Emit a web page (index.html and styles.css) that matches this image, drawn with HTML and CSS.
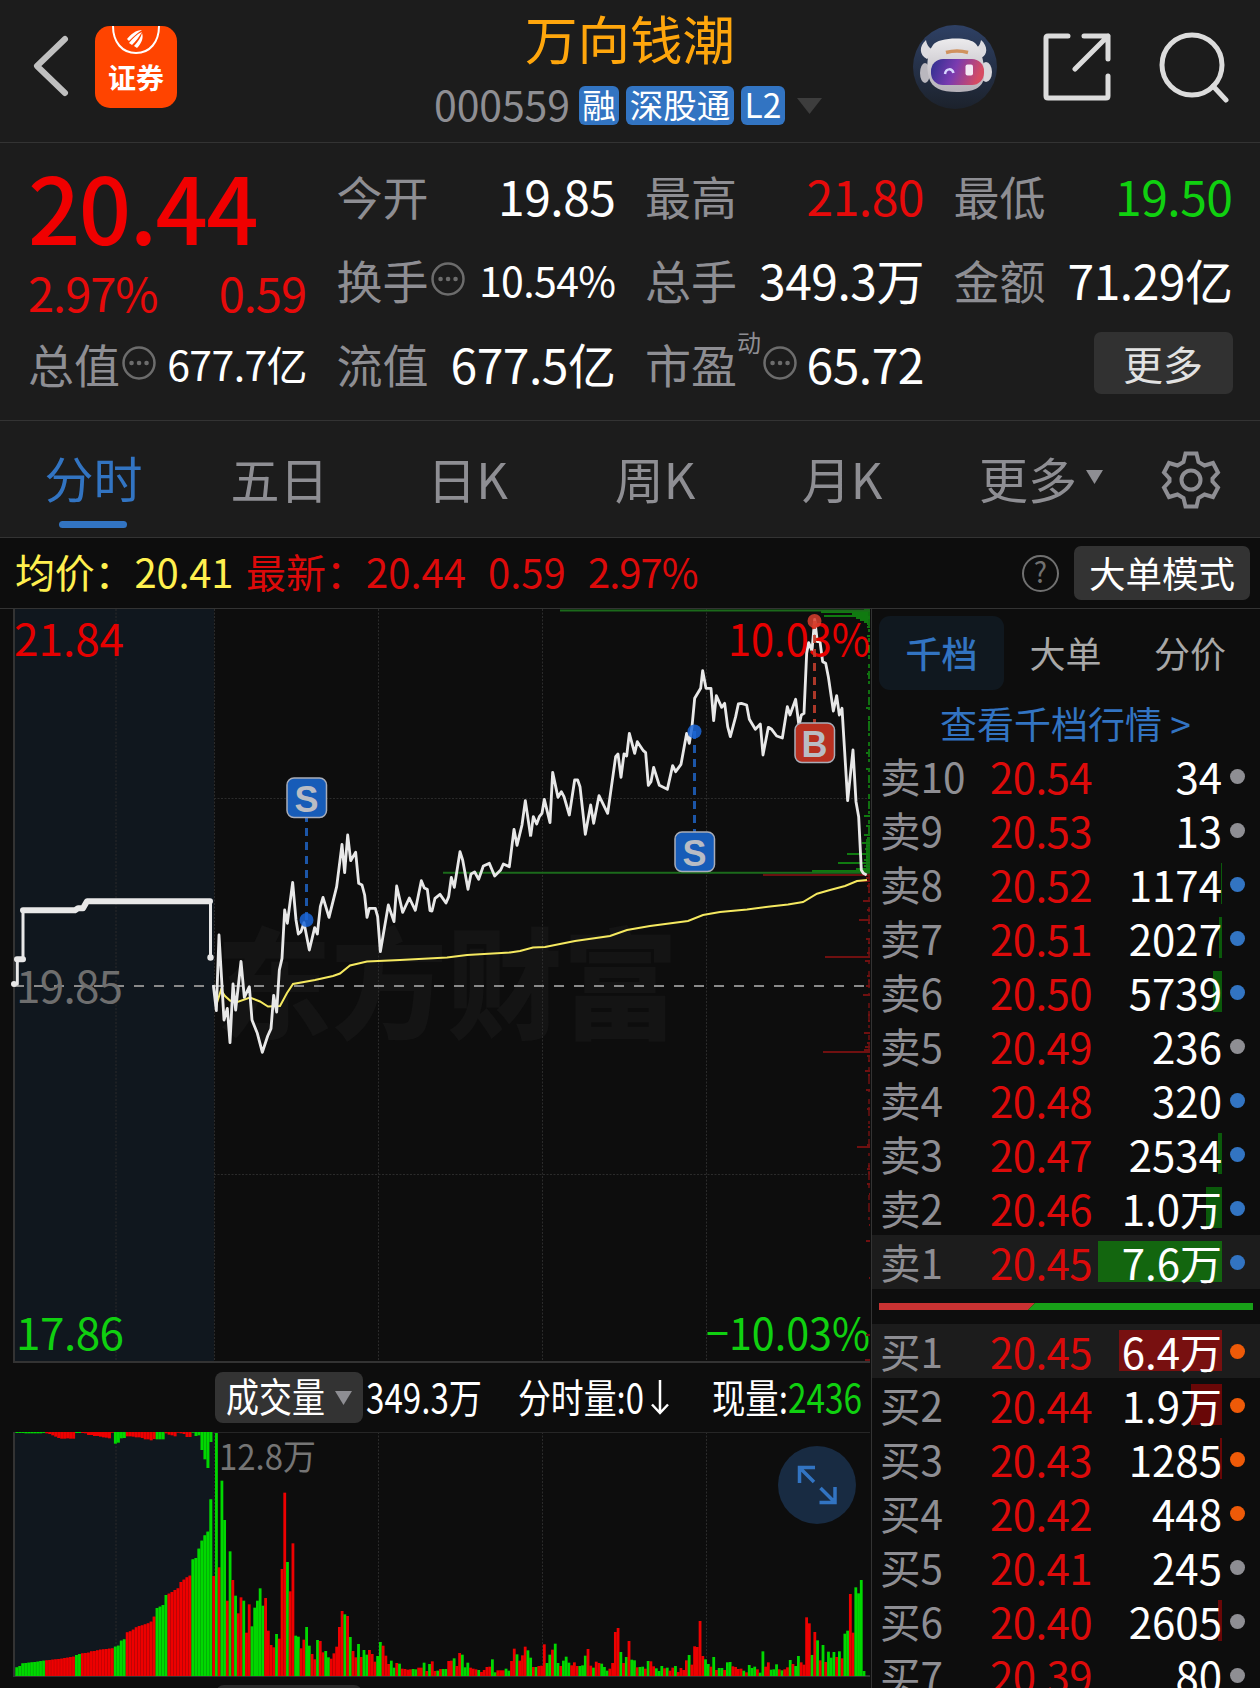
FILE: index.html
```html
<!DOCTYPE html>
<html lang="zh-CN">
<head>
<meta charset="utf-8">
<title>万向钱潮 000559</title>
<link rel="stylesheet" href="styles.css">
</head>
<body>
<header class="header">
  <svg class="back" width="44" height="64" viewBox="0 0 44 64"><path d="M37 5 9 32l28 27" fill="none" stroke="#bfbfbf" stroke-width="6" stroke-linecap="round" stroke-linejoin="round"/></svg>
  <div class="broker">
    <svg class="broker-mark" width="82" height="32" viewBox="0 0 82 32"><path d="M18 0c0 16 9 27 23 27S64 16 64 0" fill="none" stroke="#fff" stroke-width="2"/><path d="M32 13c4-5 9-9 15-9-5 3-9 7-13 11zM34 17c4-5 8-9 13-11-3 5-6 9-10 13zM39 20c4-4 7-9 8-13 2 5-1 11-5 15z" fill="#fff"/></svg>
    <span>证券</span>
  </div>
  <div class="title">
    <h1>万向钱潮</h1>
    <div class="code-row">
      <span class="code">000559</span>
      <span class="badge b1">融</span><span class="badge b3">深股通</span><span class="badge b2">L2</span>
      <svg width="26" height="18" viewBox="0 0 26 18"><path d="M0 1h25L12.500 17z" fill="#3d3d3d"/></svg>
    </div>
  </div>
  <div class="actions">
    <svg width="84" height="84" viewBox="0 0 84 84">
      <defs>
        <linearGradient id="sky" x1="0" y1="0" x2="0" y2="1"><stop offset="0" stop-color="#2e4064"/><stop offset="1" stop-color="#1c222c"/></linearGradient>
        <linearGradient id="visor" x1="0" y1="0" x2="1" y2=".2"><stop offset="0" stop-color="#2b2f8e"/><stop offset=".5" stop-color="#7a3bb0"/><stop offset="1" stop-color="#d64b62"/></linearGradient>
        <linearGradient id="shell" x1="0" y1="0" x2="0" y2="1"><stop offset="0" stop-color="#ecebed"/><stop offset="1" stop-color="#b4b0b8"/></linearGradient>
      </defs>
      <circle cx="42" cy="42" r="42" fill="url(#sky)"/>
      <path d="M13 15c-7 6-7 15 1 19l10-9c-7 0-10-4-11-10zM68 15c7 6 7 15 0 18l-10-9c6 0 9-3 10-9z" fill="#dcdbe0"/>
      <ellipse cx="12" cy="48" rx="5" ry="10" fill="#b9b7be"/><ellipse cx="73" cy="47" rx="6" ry="10" fill="#d9d7db"/>
      <path d="M20 20c5-8 37-9 43-1 6 7 9 21 8 33-1 11-11 15-27 15s-25-4-28-14c-3-11-2-25 4-33z" fill="url(#shell)"/>
      <rect x="18" y="34" width="53" height="26" rx="12" fill="url(#visor)"/>
      <path d="M33 27.500q11-3 22 0" stroke="#d0925e" stroke-width="3.500" fill="none"/>
      <path d="M32 49c1-6 7-6 8.500-1" stroke="#d8d6ff" stroke-width="2.500" fill="none"/><rect x="52.500" y="39.500" width="7.500" height="11" rx="2" fill="#f3e8f4"/>
    </svg>
    <svg width="68" height="68" viewBox="0 0 68 68" fill="none" stroke="#dcdcdc" stroke-width="5" stroke-linecap="round" stroke-linejoin="round"><path d="M25 3H5q-2 0-2 2v58q0 2 2 2h58q2 0 2-2V43M41 3h24v23M65 3 32 36"/></svg>
    <svg width="72" height="72" viewBox="0 0 72 72" fill="none" stroke="#dcdcdc" stroke-width="5" stroke-linecap="round"><circle cx="34" cy="34" r="30"/><path d="M55 55 68 69"/></svg>
  </div>
</header>

<section class="quote">
  <div class="price">
    <div class="last">20.44</div>
    <div class="change"><span>2.97%</span><span>0.59</span></div>
  </div>
  <div class="cell"><label>今开</label><b>19.85</b></div>
  <div class="cell"><label>最高</label><b class="up">21.80</b></div>
  <div class="cell"><label>最低</label><b class="down">19.50</b></div>
  <div class="cell"><label>换手</label><svg class="dots" width="34" height="34" viewBox="0 0 34 34"><circle cx="17" cy="17" r="15.500"/><path d="M9.500 17h.1M17 17h.1M24.500 17h.1"/></svg><b class="sm">10.54%</b></div>
  <div class="cell"><label>总手</label><b>349.3万</b></div>
  <div class="cell"><label>金额</label><b>71.29亿</b></div>
  <div class="cell"><label>总值</label><svg class="dots" width="34" height="34" viewBox="0 0 34 34"><circle cx="17" cy="17" r="15.500"/><path d="M9.500 17h.1M17 17h.1M24.500 17h.1"/></svg><b class="sm">677.7亿</b></div>
  <div class="cell"><label>流值</label><b>677.5亿</b></div>
  <div class="cell"><label>市盈</label><sup>动</sup><svg class="dots" width="34" height="34" viewBox="0 0 34 34"><circle cx="17" cy="17" r="15.500"/><path d="M9.500 17h.1M17 17h.1M24.500 17h.1"/></svg><b>65.72</b></div>
  <div class="cell end"><button class="more">更多</button></div>
</section>

<nav class="tabs">
  <span class="on">分时</span><span>五日</span><span class="dk">日K</span><span>周K</span><span>月K</span>
  <span class="drop">更多<svg width="17" height="14" viewBox="0 0 17 14"><path d="M0 0h17L8.500 14z" fill="#8e8e93"/></svg></span>
  <svg class="gear" width="60" height="60" viewBox="0 0 60 60" fill="none" stroke="#8e8e93" stroke-width="4"><path d="M24.500 3.500h11l2 8.500 6 3.500 8.500-2.500 5 9.500-5.500 6v3l5.500 6-5 9.500-8.500-2.500-6 3.500-2 8.500h-11l-2-8.500-6-3.500-8.500 2.500-5-9.500 5.500-6v-3l-5.500-6 5-9.500 8.500 2.500 6-3.500z"/><circle cx="30" cy="30" r="9.500"/></svg>
</nav>

<div class="info">
  <span class="avg">均价：20.41</span><span class="new">最新：20.44</span><span class="new n2">0.59</span><span class="new n3">2.97%</span>
  <span class="help">?</span>
  <button class="mode">大单模式</button>
</div>

<main class="main">
  <div class="left">
    <svg class="chart" width="871" height="754" viewBox="0 609 871 754">
      <rect x="14" y="609" width="200" height="753" fill="#10171e"/>
      <text class="mark" x="216" y="1030" textLength="462" lengthAdjust="spacingAndGlyphs">东方财富</text>
      <path class="grid" d="M116 609v753M214.500 609v753M378.500 609v753M542.500 609v753M706.500 609v753M214 798.500h656M214 1174.500h656"/>
      <path class="frame" d="M14 609v753h856"/>
      <path d="M14 986h856" stroke="#8a8a8a" stroke-width="2" stroke-dasharray="10 10"/>
      <text class="axis" x="14" y="656" fill="#e60000" textLength="110">21.84</text>
      <text class="axis" x="16" y="1003" fill="#6e6e6e" textLength="107">19.85</text>
      <text class="axis" x="16" y="1350" fill="#10d010" textLength="108">17.86</text>
      <text class="axis" x="706" y="1350" fill="#10d010" textLength="164" lengthAdjust="spacingAndGlyphs">−10.03%</text>
      <g id="depth" stroke-width="2"></g>
      <path d="M560 610.500h310M443 872.700h427" stroke="#1b6a1b" stroke-width="2"/>
      <path d="M763 875h107" stroke="#6b1010" stroke-width="2"/>
      <g fill="none" stroke="#e8e8e8" stroke-linejoin="round">
        <path d="M14 984h3.300v-24.700H23v-49" stroke-width="3"/>
        <path d="M17 959.300h6M23 910.300h52l3-2h5l4-7h123" stroke-width="6" stroke-linecap="round"/>
        <path d="M210.500 901v56" stroke-width="3"/>
      </g>
      <circle cx="14" cy="984" r="3" fill="#e8e8e8"/><circle cx="210.500" cy="957.500" r="3.200" fill="#e8e8e8"/>
      <polyline fill="none" stroke="#f5e960" stroke-width="2" points="216,1006 221,990 225,996 230,1000.500 236,1002.500 250,997.500 260,1001.500 268,1006.500 280,1006 287,993 293,984 315,980 333,976 340,973.500 350,965.500 367,961.500 400,960 447,957.500 467,955 510,952.500 520,951 533,947.500 545,947 575,941 610,936 627,930 650,926 688,921 703,915 720,912 747,909.500 770,906.600 788,904.600 803,902 817,893.700 830,890 845,886 857,881 867,880"/>
      <g fill="none" stroke="#e8e8e8" stroke-width="8.500" stroke-linejoin="round">
        <polyline transform="translate(200 760) scale(.33333)" points="40,675 49,752 57,525 72,780 82,745 90,848 99,672 107,750 123,604 133,712 148,680 156,780 172,820 187,877 203,828 213,806 221,706 230,756 238,630 246,595 254,450 262,490 278,367 288,480 295,522 303,515 312,488 328,570 344,503 352,522 361,440 369,412 387,472 405,400 410,380 426,253 434,338 443,225 452,302 467,277 476,370 486,375 494,405 501,472 508,445 526,445 533,470 541,575 565,435 582,485 590,378 608,457 628,414 646,451 664,362 673,384 682,388 690,452 696,453 705,415 720,403 738,429 746,410 754,352 763,382 780,275 788,300 804,388 813,342 824,336 836,358 850,318 868,310 884,348 902,330 910,312 928,320 942,208 951,256 966,195 976,122 992,230"/>
        <polyline transform="translate(530 600) scale(.33333)" points="2,708 10,650 20,672 28,650 36,640 43,598 60,668 68,517 84,592 94,575 102,590 118,645 134,540 143,540 150,560 166,703 182,615 191,670 207,587 233,640 257,470 264,462 273,532 282,462 290,468 298,400 314,460 322,425 340,452 347,458 355,556 363,545 371,502 388,556 412,568 428,497 437,515 453,493 470,400 478,430 486,380 494,295 512,265 518,212 528,265 543,265 551,362 559,287 575,322 584,310 593,380 601,410 617,350 625,312 634,310 650,315 658,358 676,388 691,372 699,465 715,382 725,388 740,408 757,414 772,320 780,345 797,298 807,378 814,345 822,340 830,160 836,128 846,152 854,58 862,125 870,125 878,185 887,190 895,230 910,333 920,287 928,345 936,325 944,455 953,602 969,450 978,605 986,650 994,810 1000,820 1010,825"/>
      </g>
      <text class="axis" x="728" y="656" fill="#e60000" textLength="142" lengthAdjust="spacingAndGlyphs">10.03%</text>
      <g stroke-width="3" stroke-dasharray="8 6" opacity=".85">
        <path d="M306.500 920V818M694.500 731v102" stroke="#1f63c4"/><path d="M814.500 621v102" stroke="#c8402e"/>
      </g>
      <g opacity=".85"><circle cx="306.500" cy="920" r="7" fill="#1b66d8"/><circle cx="694.500" cy="731.500" r="7" fill="#1b66d8"/><circle cx="814.500" cy="621" r="7" fill="#d8402e"/></g>
      <g stroke="#a9adb8" stroke-width="1.500">
        <rect x="287" y="778" width="39.500" height="39.500" rx="7" fill="#175cb8"/>
        <rect x="675" y="832" width="39.500" height="39.500" rx="7" fill="#175cb8"/>
        <rect x="795" y="723" width="39.500" height="39.500" rx="7" fill="#b83020"/>
      </g>
      <g class="tag"><text x="306.500" y="811.500">S</text><text x="694.500" y="865.500">S</text><text x="814.500" y="756.500">B</text></g>
    </svg>
    <div class="strip">
      <div class="pill"><svg width="99" height="46" viewBox="0 0 99 46"><text x="0" y="37" textLength="99" lengthAdjust="spacingAndGlyphs">成交量</text></svg><svg width="18" height="14" viewBox="0 0 18 14"><path d="M0 0h17L8.500 14z" fill="#8e8e93"/></svg></div>
      <svg width="116" height="46" viewBox="0 0 116 46"><text x="0" y="38" textLength="116" lengthAdjust="spacingAndGlyphs">349.3万</text></svg>
      <svg class="s2" width="154" height="46" viewBox="0 0 154 46"><text x="0" y="38" textLength="126" lengthAdjust="spacingAndGlyphs">分时量:0</text><path d="M142 5v33M134 29.500l8 8.500 8-8.500" fill="none" stroke="#fff" stroke-width="2.500"/></svg>
      <svg class="s3" width="151" height="46" viewBox="0 0 151 46"><text x="0" y="38" textLength="150" lengthAdjust="spacingAndGlyphs">现量:<tspan fill="#10d010">2436</tspan></text></svg>
    </div>
    <div class="volume">
      <svg width="871" height="246" viewBox="0 1432 871 246">
        <rect x="14" y="1432" width="200" height="244" fill="#10171e"/>
        <path class="grid" d="M116 1432v244M214.500 1432v244M378.500 1432v244M542.500 1432v244M706.500 1432v244"/>
        <path d="M14 1432.500h856" stroke="#262626"/><path class="frame" d="M14 1432v244h856"/>
        <g id="bars"></g>
        <text class="peak" x="219" y="1469.500" textLength="97" lengthAdjust="spacingAndGlyphs">12.8万</text>
        <circle cx="817" cy="1485" r="39" fill="#182b42"/>
        <path d="M799.500 1483v-15.500H815M800 1468l14 14M835 1487v15.500h-15.500M834.500 1502l-14-14" fill="none" stroke="#3274c2" stroke-width="3.500"/>
      </svg>
      <div class="next"></div>
    </div>
  </div>

  <aside class="side">
    <div class="side-tabs"><span class="on">千档</span><span>大单</span><span>分价</span></div>
    <a class="link">查看千档行情 &gt;</a>
    <div id="asks"></div>
    <svg class="ratio" width="374" height="7" viewBox="0 0 374 7"><path d="M0 0h156l-7 7H0z" fill="#c83232"/><path d="M156 0h218v7H149z" fill="#18a018"/></svg>
    <div id="bids"></div>
  </aside>
</main>
<script src="script.js"></script>
</body>
</html>
```
FILE: styles.css
```css
* { box-sizing: border-box; }
body {
  margin: 0; width: 1260px; height: 1688px; overflow: hidden;
  background: #0d0d0d; color: #fff;
  font-family: "Noto Sans CJK SC", "Noto Sans", sans-serif; line-height: 1;
}
svg { display: block; flex: none; }
button { border: 0; font: inherit; color: inherit; padding: 0; }
.header { height: 143px; background: #1c1c1c; border-bottom: 1px solid #333; display: grid; grid-template-columns: 67px 82px 1fr 313px; align-items: start; padding-left: 28px; }
.back { margin-top: 34px; }
.broker { margin-top: 26px; width: 82px; height: 82px; border-radius: 15px; background: #ff4400; text-align: center; overflow: hidden; }
.broker span { display: block; font-size: 28px; font-weight: 700; margin-top: 5px; }
.title { display: flex; flex-direction: column; align-items: flex-start; padding-left: 257px; }
.title h1 { margin: 9px 0 0 91px; font-size: 52.500px; font-weight: 400; color: #ffa60c; line-height: 56px; white-space: nowrap; }
.code-row { display: flex; align-items: center; height: 39px; margin-top: 21px; }
.code { font-size: 41px; color: #8e8e93; width: 145px; height: 46px; padding-left: 0; letter-spacing: -.1px; }
.badge { height: 39px; line-height: 35px; border-radius: 6px; background: #3274c2; font-size: 33.500px; text-align: center; margin-right: 7px; white-space: nowrap; }
.b1 { width: 40px; } .b3 { width: 108px; } .b2 { width: 44px; margin-right: 12px; }
.actions { display: flex; padding-top: 25px; margin-left: -34px; }
.actions svg:nth-child(2) { margin: 8px 0 0 46px; }
.actions svg:nth-child(3) { margin: 6px 0 0 47px; }

.quote { height: 278px; background: #1c1c1c; border-bottom: 1px solid #333; display: grid; grid-template-columns: repeat(4, 279px); column-gap: 29.500px; grid-auto-rows: 84px; padding: 10px 0 0 28px; }
.price { grid-row: span 2; }
.last { font-size: 92px; font-weight: 500; color: #f00000; line-height: 92px; margin-top: 6px; letter-spacing: -1.600px; }
.change { display: flex; justify-content: space-between; font-size: 47px; line-height: 50px; color: #e60a0a; margin-top: 16px; padding-right: 1px; letter-spacing: -1px; }
.cell { display: flex; align-items: center; white-space: nowrap; }
.cell label { font-size: 46px; color: #8e8e93; }
.cell b { margin-left: auto; font-size: 48px; font-weight: 400; letter-spacing: -.5px; }
.cell b.sm { font-size: 41px; letter-spacing: -.6px; }
.cell b.up { color: #e60a0a; } .cell b.down { color: #10d010; }
.cell sup { font-size: 24px; color: #8e8e93; align-self: flex-start; margin-top: 9px; }
.dots { margin-left: 2px; fill: none; stroke: #6c6c6c; stroke-width: 2.500; stroke-linecap: round; }
.dots path { stroke-width: 4.500; }
.cell.end { justify-content: flex-end; }
.more { width: 139px; height: 62px; border-radius: 7px; background: #313131; color: #e2e2e2; font-size: 40px; line-height: 54px; }

.tabs { height: 117px; background: #1c1c1c; border-bottom: 1px solid #333; display: grid; grid-template-columns: 187px 185px 199px 168px 206px 195px 1fr; justify-items: center; align-items: center; font-size: 49px; color: #8e8e93; }
.tabs span { height: 54px; white-space: nowrap; }
.tabs .dk { margin-right: 8px; }
.tabs .on { color: #3274c2; height: 117px; padding-top: 31px; display: flex; flex-direction: column; align-items: center; }
.tabs .on::after { content: ""; width: 68px; height: 7px; border-radius: 3.500px; background: #3274c2; margin-top: 20px; }
.tabs .drop { display: flex; align-items: center; gap: 9px; height: 56px; padding-bottom: 5px; margin-right: 3px; }
.gear { justify-self: start; margin-left: 21px; }

.info { height: 71px; border-bottom: 1px solid #333; display: flex; align-items: center; padding: 0 10px 0 15px; font-size: 40px; white-space: nowrap; }
.info span { height: 44px; }
.avg { color: #fff04f; width: 231px; letter-spacing: -.2px; }
.new { color: #dc0a0a; width: 242px; }
.n2 { width: 100px; } .n3 { width: 130px; letter-spacing: -1px; }
.info .help { margin-left: auto; margin-right: 15px; width: 37px; height: 37px; border: 2.500px solid #707070; border-radius: 50%; color: #707070; font-size: 28px; line-height: 28px; text-align: center; }
.mode { width: 176px; height: 54px; border-radius: 7px; background: #333; font-size: 36.500px; line-height: 48px; }

.main { display: grid; grid-template-columns: 871px 389px; }
.frame { fill: none; stroke: #333; stroke-width: 2; }
.grid { fill: none; stroke: #2b2b2b; stroke-width: 1; stroke-dasharray: 2 1.500; }
.mark { font-size: 120px; font-weight: 900; fill: #141414; }
.axis { font-size: 44px; }
.peak { font-size: 35px; fill: #757575; }
.tag text { font: 700 36px "Liberation Sans", sans-serif; fill: #b9bcc4; text-anchor: middle; }
.strip { height: 69px; padding-left: 215px; display: flex; align-items: center; }
.strip text { font-size: 40px; fill: #fff; }
.pill { width: 148px; height: 51px; border-radius: 8px; background: #333; display: flex; align-items: center; gap: 10px; padding-left: 11px; margin-right: 3px; }
.s2 { margin-left: 36px; } .s3 { margin-left: 40px; }
.volume { height: 256px; overflow: hidden; }
.next { width: 146px; height: 40px; margin: 7px 0 0 216px; border-radius: 8px; background: #2b2b2b; }

.side { border-left: 1px solid #333; height: 1079px; overflow: hidden; }
.side-tabs { display: grid; grid-template-columns: 125px 123px 126px; margin: 7px 0 0 7px; height: 74px; text-align: center; font-size: 36px; line-height: 73px; color: #a8a8a8; }
.side-tabs .on { background: #10181f; border-radius: 11px; color: #3274c2; font-weight: 500; }
.link { display: block; height: 59px; padding: 11px 0 0 68px; font-size: 37px; line-height: 44px; color: #3274c2; white-space: nowrap; }
.row { height: 54px; display: grid; grid-template-columns: 110px 99px 133px 1fr; align-items: center; padding-left: 8px; font-size: 42px; white-space: nowrap; }
.row.hot { background: #1c1c1c; }
.row .name { color: #8e8e93; font-size: 40.500px; }
.row .px { color: #dc0a0a; letter-spacing: -.6px; }
.row .qty { display: grid; justify-items: end; align-items: center; }
.qty > * { grid-area: 1 / 1; }
.qty i { height: 41px; background: #0b5a0b; margin-bottom: 1px; }
.hot .qty i { background: #13660f; }
#bids .qty i { background: #690707; }
#bids .hot .qty i { background: #781010; }
.dot { width: 15px; height: 15px; border-radius: 50%; background: #8e8e93; margin-left: 8px; }
.dot.blue { background: #3274c2; } .dot.orange { background: #ee5a08; }
.ratio { margin: 14px 0 14px 7px; }
```
FILE: script.js
```js
const asks = [["卖10","20.54","34",0,""],["卖9","20.53","13",0,""],["卖8","20.52","1174",1,"blue"],["卖7","20.51","2027",3,"blue"],["卖6","20.50","5739",9,"blue"],["卖5","20.49","236",0,""],["卖4","20.48","320",0,"blue"],["卖3","20.47","2534",4,"blue"],["卖2","20.46","1.0万",16,"blue"],["卖1","20.45","7.6万",124,"blue"]];
const bids = [["买1","20.45","6.4万",103,"orange"],["买2","20.44","1.9万",31,"orange"],["买3","20.43","1285",2,"orange"],["买4","20.42","448",0,"orange"],["买5","20.41","245",0,""],["买6","20.40","2605",4,""],["买7","20.39","80",0,""]];
const row = ([n, p, q, w, d]) => `<div class="row${n.slice(1) === "1" ? " hot" : ""}"><span class="name">${n}</span><span class="px">${p}</span><span class="qty"><i style="width:${w}px"></i><span>${q}</span></span><span class="dot ${d}"></span></div>`;
document.getElementById("asks").innerHTML = asks.map(row).join("");
document.getElementById("bids").innerHTML = bids.map(row).join("");

const RED = "#ee0000", GREEN = "#00d800", BASE = 1676;
const rect = (x, y, w, h, c) => `<rect x="${x.toFixed(2)}" y="${y.toFixed(2)}" width="${w}" height="${h.toFixed(2)}" fill="${c === "R" ? RED : GREEN}"/>`;
const parse = s => s.trim().split(/\s+/).map(t => [t[0], +t.slice(1)]);

/* Call-auction bars: matched volume from the bottom, unmatched from the top. */
const auction = parse(`G952 G948 G940 G939 G938 G937 G936 G935 G933 G932 R931 R930 R929 R928 R927 R926 R924 R923 R921 R920 G915 G912
R910 R909 R908 R904 R903 R901 R899 R898 R897 R896 R895 G890 G887 G872 G868 R847 R844 R839 R832 R828 R826 R823 R820 R815 R800
G774 G770 G765 G735 R731 R726 R720 R715 R696 R689 R682 R677 G628 G624 G596 G572 G556 G545 G448`);
const unmatched = parse(`G249 G249 G249 G250 G250 G250 G250 G250 G250 G249 R250 R252 R256 R260 R264 R266 R266 R265 R266 R266 G249 G249
R249 R250 R255 R255 R258 R258 R260 R262 R263 R265 R248 G281 G278 G265 G264 R259 R259 R260 R262 R262 R264 R268 R268 R271 R267
G268 G268 G268 R250 R254 R256 R259 R248 R250 R252 R261 R261 G248 G258 G256 G300 G328 G354 G276`);
const trade = parse(`R678 G249 R652 G392 G510 R752 G604 R690 G737 R790 R742 G752 R848 R763 G829 G773 G752 G715 G767 R744 R842 R885 R892 G852 R866 R657 R428 G636 R724 R580
G857 G860 R895 R869 G831 G887 R912 R928 G870 R873 R907 G903 G922 R926 R910 R890 R831 R783 G793 R798 G861 R903 R922 G882 R921 G900 G914 R900 R912 R935 G918 G876
R887 R917 R942 G932 G953 R939 G941 R956 R957 R959 R958 G957 G958 R953 R953 G938 R963 G942 R934 R963 G962 R957 G957 G957 R933 R932 G925 R948 R909 G914 G952 G938
R953 R956 R958 G960 R966 R960 R951 R950 G928 G967 R961 R961 R961 G956 G962 R933 R896 G913 R932 R916 R890 G901 G923 R951 G951 R948 R947 R883 G939 G914 R899 G881 G939
R948 G932 G920 G938 R946 R937 R948 G948 G946 G917 R897 R947 G953 R935 R939 G941 G951 G962 R956 R939 R846 R834 G906 R939 G921 R873 G929 G931 R952 G951 G950 R956 G933 R934
R949 G955 G963 G948 R955 G953 R962 R953 G948 R966 R954 R960 R931 G915 R944 R889 R891 R813 R918 G928 G942 R950 G921 R960 G954 G954 R960 G937 G936 R949 R951 R957 R956 G962 R967
G945 G954 G950 R958 G968 G904 R950 R937 G959 G958 G943 R958 G961 R958 R952 G930 R942 G948 G918 R937 R944 R802 R820 G915 R846 G871 R931 G885 R936 G905 G923 G906 R921 G904 R925
G851 G842 R732 R848 G712 G730 G690 G963`);
let out = "";
auction.forEach(([c, v], i) => { const y = 1350 + v / 3; out += `<rect x="${(15.4 + i * 2.985).toFixed(2)}" y="${y}" width="3" height="${BASE - y}" fill="${c === "R" ? RED : GREEN}" opacity=".6"/>` + rect(15.4 + i * 2.985, y, 2.6, BASE - y, c); });
unmatched.forEach(([c, v], i) => { out += rect(15.4 + i * 2.985, 1432, 3, (v - 246) / 3, c); });
const pitch = (864 - 213.7) / (trade.length - 1);
trade.forEach(([c, v], i) => { const y = 1350 + v / 3; out += rect(213.7 + i * pitch - 1.4, y, 2.8, BASE - y, c); });
document.getElementById("bars").innerHTML = out;

/* Resting order depth along the right edge: [y, length]. */
const sell = [[612,49],[614,18],[616,46],[618,14],[620,10],[622,6],[624,3],[627,3],[636,3],[647,2],[658,2],[674,3],[708,4],[722,2],[745,2],[753,4],[769,4],[780,2],[798,2],[816,6],[826,4],[835,6],[838,3],[843,8],[846,4],[849,5],[854,23],[857,4],[860,6],[863,32],[866,6],[869,14],[871,58]];
const buy = [[878,4],[881,14],[886,3],[892,2],[901,7],[910,3],[920,11],[923,2],[939,4],[943,2],[953,3],[957,45],[961,5],[976,3],[981,2],[986,4],[995,7],[1015,2],[1021,2],[1033,6],[1043,3],[1047,5],[1050,6],[1052,47],[1056,3],[1061,2],[1071,5],[1075,2],[1090,4],[1109,3],[1127,2],[1145,3],[1147,13],[1166,2],[1169,3],[1173,2],[1184,3],[1194,1],[1225,1],[1241,4],[1278,1],[1335,4],[1360,5]];
const lines = (a, c) => a.map(([y, w]) => `<path d="M${870 - w} ${y}h${w}" stroke="${c}"/>`).join("");
document.getElementById("depth").innerHTML = '<path d="M864 609h6v13h-6zM866 839h4v33h-4z" fill="#0b740b"/>' + lines(sell, "#107a10") + lines(buy, "#701010")
  + '<path d="M869 612V872" stroke="#107010" stroke-dasharray="4 3 8 2 3 6"/><path d="M869 875V1220" stroke="#701010" stroke-width="1.5" stroke-dasharray="5 3 9 5 3 7"/>';
```
